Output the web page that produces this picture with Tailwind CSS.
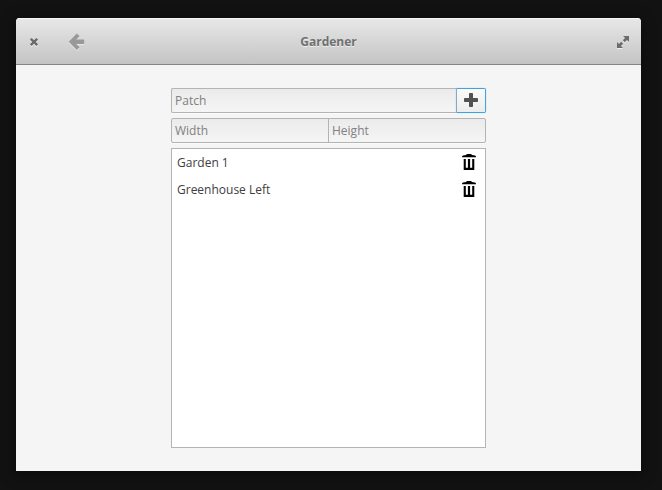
<!DOCTYPE html>
<html lang="en">
<head>
<meta charset="utf-8">
<title>Gardener</title>
<script src="https://cdn.jsdelivr.net/npm/@tailwindcss/browser@4"></script>
</head>
<body class="h-screen overflow-hidden bg-[#121212] px-4 pt-[18px] font-['Open_Sans',sans-serif] text-[12px] leading-4 text-[#4d4d4d]">
<main class="flex h-[453px] w-[625px] flex-col overflow-hidden rounded-t-[4px] bg-[#f5f5f5] shadow-[0_3px_14px_2px_rgba(0,0,0,0.4)]">
  <header class="flex h-[47px] shrink-0 items-center justify-between border-b border-[#858585] bg-linear-to-b from-[#e8e8e8] to-[#c4c4c4] pt-[2px] pr-[12px] pl-[14px] shadow-[inset_0_1px_0_#f5f5f5]">
    <div class="flex w-[80px] items-center gap-[31px]">
      <svg class="h-[9px] w-[8px] shrink-0" viewBox="0 0 8 9"><path d="M.8 1.800 7.200 8.200M7.200 1.800.8 8.200" stroke="#eee" stroke-width="2.4"/><path d="M.8.8 7.200 7.200M7.200.8.8 7.200" stroke="#6c6c6c" stroke-width="2.4"/></svg>
      <svg class="h-[18px] w-[16px] shrink-0" viewBox="0 0 16 18"><path transform="translate(0 1)" d="M7.800.400 10.600 3.200 7.200 6.500H14.500q.700 0 .700.700v3q0 .700-.700.700H7.200l3.400 3.300-2.800 2.800L-.200 8.700Z" fill="#e8e8e8"/><path d="M7.800.400 10.600 3.200 7.200 6.500H14.500q.700 0 .700.700v3q0 .700-.700.700H7.200l3.400 3.300-2.800 2.800L-.200 8.700Z" fill="#999"/></svg>
    </div>
    <h1 class="text-[12px] font-bold text-[#707070] [text-shadow:0_1px_0_#eeeeee]">Gardener</h1>
    <div class="flex w-[82px] justify-end">
      <svg class="h-[13px] w-[12px]" viewBox="0 0 12 13"><path transform="translate(0 1)" fill="#eee" d="M6 0H12V6L10 4 7.800 6.200 5.800 4.200 8 2ZM0 6 2 8 4.200 5.800 6.200 7.800 4 10 6 12H0Z"/><path fill="#6c6c6c" d="M6 0H12V6L10 4 7.800 6.200 5.800 4.200 8 2ZM0 6 2 8 4.200 5.800 6.200 7.800 4 10 6 12H0Z"/></svg>
    </div>
  </header>
  <section class="mx-auto mt-[23px] flex w-[315px] flex-col gap-[5px]">
    <div class="flex h-[25px] rounded-[2px] shadow-[0_1px_0_#fafafa]">
      <div class="flex flex-1 items-center rounded-l-[2px] border border-r-0 border-[#b4b4b4] bg-linear-to-b from-[#ebebeb] to-[#f5f5f5] pl-[3px] text-[#808080]">Patch</div>
      <button class="flex w-[30px] items-center justify-center rounded-r-[2px] border border-[#43a1df] border-l-[#83a9c5] bg-linear-to-b from-[#fafafa] to-[#ededed] pb-px shadow-[0_0_1px_#64baff]" aria-label="Add patch">
        <svg class="h-[14px] w-[14px]" viewBox="0 0 14 14"><rect x="5" width="4" height="14" rx=".8" fill="#515151"/><rect y="5" width="14" height="4" rx=".8" fill="#515151"/></svg>
      </button>
    </div>
    <div class="flex h-[25px] rounded-[2px] border border-[#b4b4b4] bg-linear-to-b from-[#ebebeb] to-[#f5f5f5] text-[#808080] shadow-[0_1px_0_#fafafa]">
      <div class="flex w-[157px] items-center border-r border-[#b4b4b4] pl-[3px]">Width</div>
      <div class="flex flex-1 items-center pl-[3px]">Height</div>
    </div>
    <ul class="h-[300px] border border-[#b4b4b4] bg-white text-[#404040]">
      <li class="flex h-[27px] items-center justify-between pr-[9px] pl-[5px]">Garden 1
        <svg class="mb-px h-[16px] w-[14px]" viewBox="0 0 14 16"><path fill="#000" d="M4 1Q4.500 0 5.500 0h3q1 0 1.500 1l3 .500q1 .300 1 1.500v.300H0V3Q0 1.800 1 1.500ZM1.700 5h2.100v8.700h2.100V5h2.200v8.700h2.100V5h2.100v11H1.700Z"/></svg>
      </li>
      <li class="flex h-[27px] items-center justify-between pr-[9px] pl-[5px]">Greenhouse Left
        <svg class="mb-px h-[16px] w-[14px]" viewBox="0 0 14 16"><path fill="#000" d="M4 1Q4.500 0 5.500 0h3q1 0 1.500 1l3 .500q1 .300 1 1.500v.300H0V3Q0 1.800 1 1.500ZM1.700 5h2.100v8.700h2.100V5h2.200v8.700h2.100V5h2.100v11H1.700Z"/></svg>
      </li>
    </ul>
  </section>
</main>
</body>
</html>
